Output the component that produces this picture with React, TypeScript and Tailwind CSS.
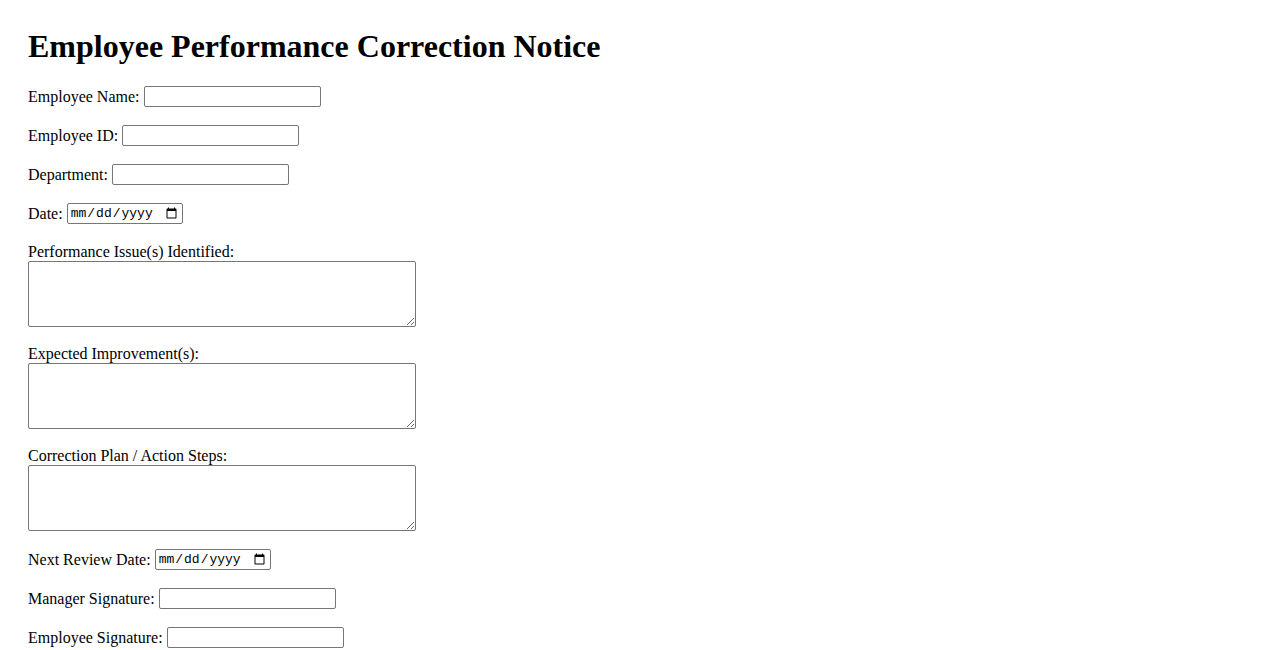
import React from "react";

const inputCls =
  "h-[21px] w-[177px] border border-[#767676] rounded-[2px] px-[2px] py-[1px] bg-white text-[13px] font-['Liberation_Sans',sans-serif] outline-none";
const dateCls =
  "h-[21px] w-[116px] border border-[#767676] rounded-[2px] px-[2px] py-[1px] bg-white text-[13px] font-['Liberation_Mono',monospace] outline-none";
const areaCls =
  "block h-[66px] w-[388px] border border-[#767676] rounded-[2px] px-[2px] py-[2px] bg-white text-[13px] font-['Liberation_Mono',monospace] outline-none";

function Row({ label, type = "text" }: { label: string; type?: string }) {
  return (
    <div className="flex h-[39px] items-center gap-[4px]">
      <label className="whitespace-nowrap">{label}</label>
      <input type={type} className={type === "date" ? dateCls : inputCls} />
    </div>
  );
}

function Area({ label, mt }: { label: string; mt: string }) {
  return (
    <div className={mt}>
      <label className="block h-[19px] leading-[19px]">{label}</label>
      <textarea className={areaCls} />
    </div>
  );
}

export default function App() {
  return (
    <div className="min-h-screen bg-white px-[28px] pt-[28px] text-[16px] text-black font-['Liberation_Serif',serif]">
      <h1 className="h-[37px] text-[32px] font-bold leading-[37px]">
        Employee Performance Correction Notice
      </h1>
      <div className="mt-[12px] flex flex-col">
        <Row label="Employee Name:" />
        <Row label="Employee ID:" />
        <Row label="Department:" />
        <Row label="Date:" type="date" />
      </div>
      <Area label="Performance Issue(s) Identified:" mt="mt-[9px]" />
      <Area label="Expected Improvement(s):" mt="mt-[17px]" />
      <Area label="Correction Plan / Action Steps:" mt="mt-[17px]" />
      <div className="mt-[9px] flex flex-col">
        <Row label="Next Review Date:" type="date" />
        <Row label="Manager Signature:" />
        <Row label="Employee Signature:" />
      </div>
    </div>
  );
}
